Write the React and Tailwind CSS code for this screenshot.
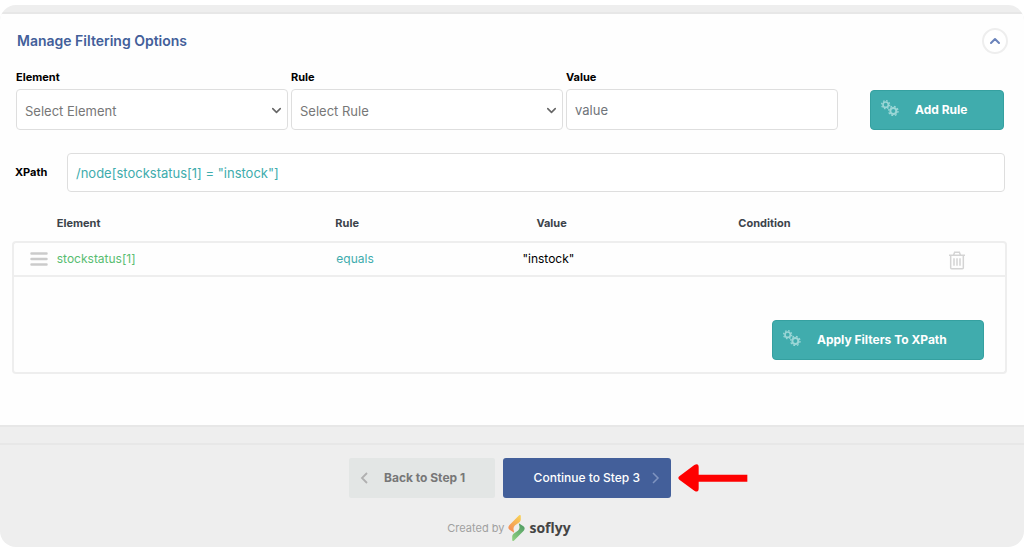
import React from "react";
import { ChevronDown, ChevronUp } from "lucide-react";

function Gears() {
  return (
    <svg className="h-4 w-[18px] shrink-0" viewBox="0 0 54 48" fill="none" stroke="#9bd6d6" aria-hidden="true">
      <circle cx="14" cy="14" r="8" strokeWidth="5" />
      <circle cx="14" cy="14" r="12" strokeWidth="4" strokeDasharray="4.7 4.72" />
      <circle cx="37" cy="33" r="9" strokeWidth="6" />
      <circle cx="37" cy="33" r="14" strokeWidth="4" strokeDasharray="5.5 5.5" />
    </svg>
  );
}

function Trash() {
  return (
    <svg className="h-[19px] w-4" viewBox="0 0 48 56" fill="none" stroke="#d4d4d4" strokeWidth="4.5" aria-hidden="true">
      <path d="M0 12H48M14 11L17 3H31L34 11M5 13V50Q5 53 8 53H40Q43 53 43 50V13" />
      <path d="M15 21V44M24 21V44M33 21V44" />
    </svg>
  );
}

function Logo() {
  const leaf = "M33 1Q38 -2 38 4V14Q38 19 34 22L20 32Q15 37 16 44L18 54L4 45Q-3 39 3 31Z";
  return (
    <svg className="h-[26px] w-[17px]" viewBox="0 0 50 79" aria-hidden="true">
      <defs>
        <linearGradient id="warm" x1="0.8" y1="0" x2="0.2" y2="1">
          <stop offset="0" stopColor="#f8cf55" />
          <stop offset="1" stopColor="#f38a57" />
        </linearGradient>
        <linearGradient id="fresh" x1="0.8" y1="0" x2="0.2" y2="1">
          <stop offset="0" stopColor="#8fcf80" />
          <stop offset="1" stopColor="#4d9b62" />
        </linearGradient>
      </defs>
      <path d={leaf} fill="url(#warm)" />
      <path d={leaf} fill="url(#fresh)" transform="rotate(180 25 39.5)" />
    </svg>
  );
}

function SelectField({ id, label, option }) {
  return (
    <div className="min-w-0 flex-1">
      <label htmlFor={id} className="block text-[11px] leading-4 font-bold text-black">{label}</label>
      <div className="relative mt-1">
        <select id={id} className="block h-[41px] w-full appearance-none rounded-[4px] border border-[#dedede] bg-white px-2 pt-1 text-[13px] text-[#777]">
          <option>{option}</option>
        </select>
        <ChevronDown className="pointer-events-none absolute top-[14px] right-1 size-[15px] text-[#666]" strokeWidth={2.5} />
      </div>
    </div>
  );
}

export default function App() {
  return (
    <div className="bg-white py-[5px] font-[Inter,sans-serif]">
      <main className="overflow-hidden rounded-2xl bg-[#eee]">
        <section className="mt-[7px] border-t-2 border-b-2 border-[#e7e7e7] bg-[#fefefe] pb-[51px]">
          <div className="flex items-center justify-between pt-[14px] pr-4 pl-[17px]">
            <h1 className="text-[14px] leading-6 font-semibold text-[#435f9a]">Manage Filtering Options</h1>
            <button type="button" aria-label="Collapse" className="flex size-[26px] items-center justify-center rounded-full border-2 border-[#eee] bg-white text-[#6a83bb]">
              <ChevronUp className="size-4" strokeWidth={3} />
            </button>
          </div>

          <form className="mt-[15px] flex items-end gap-8 pr-5 pl-4">
            <div className="flex flex-1 gap-[3px]">
              <SelectField id="element" label="Element" option="Select Element" />
              <SelectField id="rule" label="Rule" option="Select Rule" />
              <div className="min-w-0 flex-1">
                <label htmlFor="value" className="block text-[11px] leading-4 font-bold text-black">Value</label>
                <input id="value" placeholder="value" className="mt-1 block h-[41px] w-full rounded-[4px] border border-[#dedede] bg-white px-2 text-[13px] placeholder:text-[#6f747a]" />
              </div>
            </div>
            <button type="button" className="flex h-10 w-[134px] rounded-[4px] border border-[#35a0a0] bg-[#40acad] pt-[9px] pl-[10px] text-white">
              <Gears />
              <span className="ml-4 text-[12px] leading-5 font-bold">Add Rule</span>
            </button>
          </form>

          <div className="mt-[23px] flex items-center pr-[19px] pl-[15px]">
            <label htmlFor="xpath" className="w-[52px] text-[11px] font-bold text-black">XPath</label>
            <input id="xpath" defaultValue={'/node[stockstatus[1] = "instock"]'} className="h-[39px] min-w-0 flex-1 rounded-[4px] border border-[#dedede] bg-white px-2 text-[13px] text-[#40acad]" />
          </div>

          <div className="mt-[14px] pr-[17px] pl-3">
            <table className="w-full table-fixed border-separate border-spacing-0 text-left text-[12px]">
              <colgroup>
                <col className="w-[4.5%]" />
                <col className="w-[28%]" />
                <col className="w-[18.8%]" />
                <col className="w-[21.7%]" />
                <col className="w-[21.2%]" />
                <col className="w-[5.8%]" />
              </colgroup>
              <thead>
                <tr className="h-[35px] text-[11px] text-[#3c434a]">
                  <td />
                  <th className="font-bold">Element</th>
                  <th className="font-bold">Rule</th>
                  <th className="pl-[14px] font-bold">Value</th>
                  <th className="font-bold">Condition</th>
                  <td />
                </tr>
              </thead>
              <tbody>
                <tr className="h-9">
                  <td className="rounded-tl-[4px] border-y-2 border-l-2 border-[#eee] pl-4">
                    <svg className="h-[14px] w-[18px]" viewBox="0 0 18 14" stroke="#cbcbcb" strokeWidth="2.5" strokeLinecap="round" aria-hidden="true">
                      <path d="M1.5 1.5H16.5M1.5 7H16.5M1.5 12.5H16.5" />
                    </svg>
                  </td>
                  <td className="border-y-2 border-[#eee] text-[#58bd71]">stockstatus[1]</td>
                  <td className="border-y-2 border-[#eee] pl-px text-[#40acad]">equals</td>
                  <td className="border-y-2 border-[#eee] text-black">"instock"</td>
                  <td className="border-y-2 border-[#eee]" />
                  <td className="rounded-tr-[4px] border-y-2 border-r-2 border-[#eee]">
                    <button type="button" aria-label="Delete rule" className="mt-[3px] block"><Trash /></button>
                  </td>
                </tr>
              </tbody>
            </table>
            <div className="flex justify-end rounded-b-[4px] border-2 border-t-0 border-[#eee] pt-[43px] pr-[21px] pb-3">
              <button type="button" className="flex h-10 w-[212px] rounded-[4px] border border-[#35a0a0] bg-[#40acad] pt-[9px] pl-[10px] text-white">
                <Gears />
                <span className="ml-4 text-[12px] leading-5 font-bold">Apply Filters To XPath</span>
              </button>
            </div>
          </div>
        </section>

        <footer className="mt-4 border-t-2 border-[#e7e7e7] pt-[13px] pb-[6px]">
          <div className="flex justify-center gap-2 pr-1">
            <button type="button" className="flex h-10 w-[146px] items-center rounded-[2px] bg-[#e3e6e5] pl-[11px] text-[12px] font-bold text-[#777]">
              <svg className="h-3 w-2" viewBox="0 0 8 12" fill="none" stroke="#b0b0b0" strokeWidth="1.8" aria-hidden="true">
                <path d="M7 1L2 6L7 11" />
              </svg>
              <span className="ml-4">Back to Step 1</span>
            </button>
            <div className="relative">
              <button type="button" className="flex h-10 w-[168px] items-center justify-end rounded-[3px] bg-[#435f9a] pr-[11px] text-[12px] font-medium text-white">
                <span className="mr-3">Continue to Step 3</span>
                <svg className="h-3 w-2" viewBox="0 0 8 12" fill="none" stroke="#7f94c0" strokeWidth="1.5" aria-hidden="true">
                  <path d="M1 1L6 6L1 11" />
                </svg>
              </button>
              <svg className="absolute top-[6px] left-full ml-[7px] h-7 w-[70px]" viewBox="0 0 210 84" fill="#fe0000" aria-hidden="true">
                <path d="M4 37L49 3Q62 -4 62 10V32H208V53H62V73Q62 88 49 80L4 47Q-2 42 4 37Z" />
              </svg>
            </div>
          </div>
          <div className="mt-[17px] flex items-center justify-center pr-[6px] text-[11px] text-[#a0a0a0]">
            <span>Created by</span>
            <a href="#" className="ml-1 flex items-center font-['Open_Sans',sans-serif] text-[14px] font-bold text-[#444]">
              <Logo />
              <span className="ml-1 leading-6">soflyy</span>
            </a>
          </div>
        </footer>
      </main>
    </div>
  );
}
